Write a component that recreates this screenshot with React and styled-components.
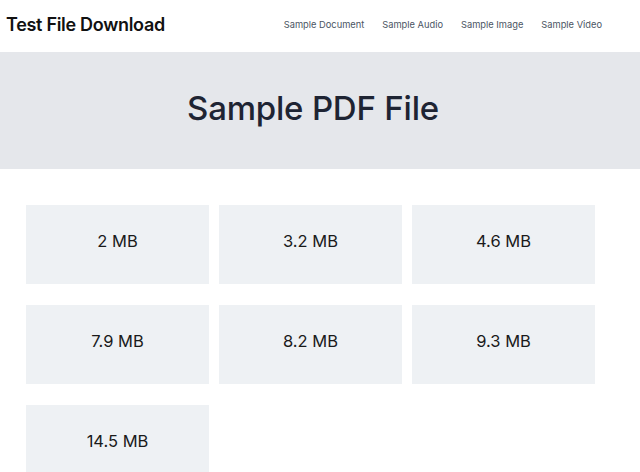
import React from 'react'
import styled, { createGlobalStyle } from 'styled-components'

const GlobalStyle = createGlobalStyle`
  html, body { margin: 0; padding: 0; background: #fff; }
  body { font-family: Inter, "Noto Sans", sans-serif; }
`

const Header = styled.header`
  height: 52px;
  display: flex;
  align-items: center;
  justify-content: space-between;
  padding: 0 38px 0 6px;
  box-sizing: border-box;
`

const Logo = styled.a`
  font-family: Inter, sans-serif;
  font-size: 18px;
  font-weight: 600;
  letter-spacing: -0.3px;
  color: #111;
  text-decoration: none;
  margin-top: -4px;
`

const Nav = styled.nav`
  display: flex;
  gap: 18px;
  margin-top: -4px;
`

const NavLink = styled.a`
  font-size: 9.3px;
  color: #4b5563;
  text-decoration: none;
`

const Hero = styled.section`
  height: 117px;
  background: #e5e7eb;
  display: flex;
  align-items: center;
  justify-content: center;
`

const Title = styled.h1`
  margin: 0 14px 0 0;
  font-size: 33px;
  font-weight: 500;
  color: #1e2433;
  letter-spacing: -0.2px;
  margin-top: -6px;
`

const Grid = styled.main`
  display: grid;
  grid-template-columns: repeat(3, 183px);
  column-gap: 10px;
  row-gap: 21px;
  padding: 36px 0 0 26px;
`

const Tile = styled.a`
  height: 79px;
  box-sizing: border-box;
  padding-bottom: 8px;
  background: #eef1f4;
  display: flex;
  align-items: center;
  justify-content: center;
  font-size: 16.5px;
  color: #1a1a1a;
  text-decoration: none;
`

const sizes = ['2 MB', '3.2 MB', '4.6 MB', '7.9 MB', '8.2 MB', '9.3 MB', '14.5 MB']
const links = ['Sample Document', 'Sample Audio', 'Sample Image', 'Sample Video']

export default function App() {
  return (
    <>
      <GlobalStyle />
      <Header>
        <Logo href="#">Test File Download</Logo>
        <Nav>
          {links.map(l => <NavLink key={l} href="#">{l}</NavLink>)}
        </Nav>
      </Header>
      <Hero>
        <Title>Sample PDF File</Title>
      </Hero>
      <Grid>
        {sizes.map(s => <Tile key={s} href="#">{s}</Tile>)}
      </Grid>
    </>
  )
}
